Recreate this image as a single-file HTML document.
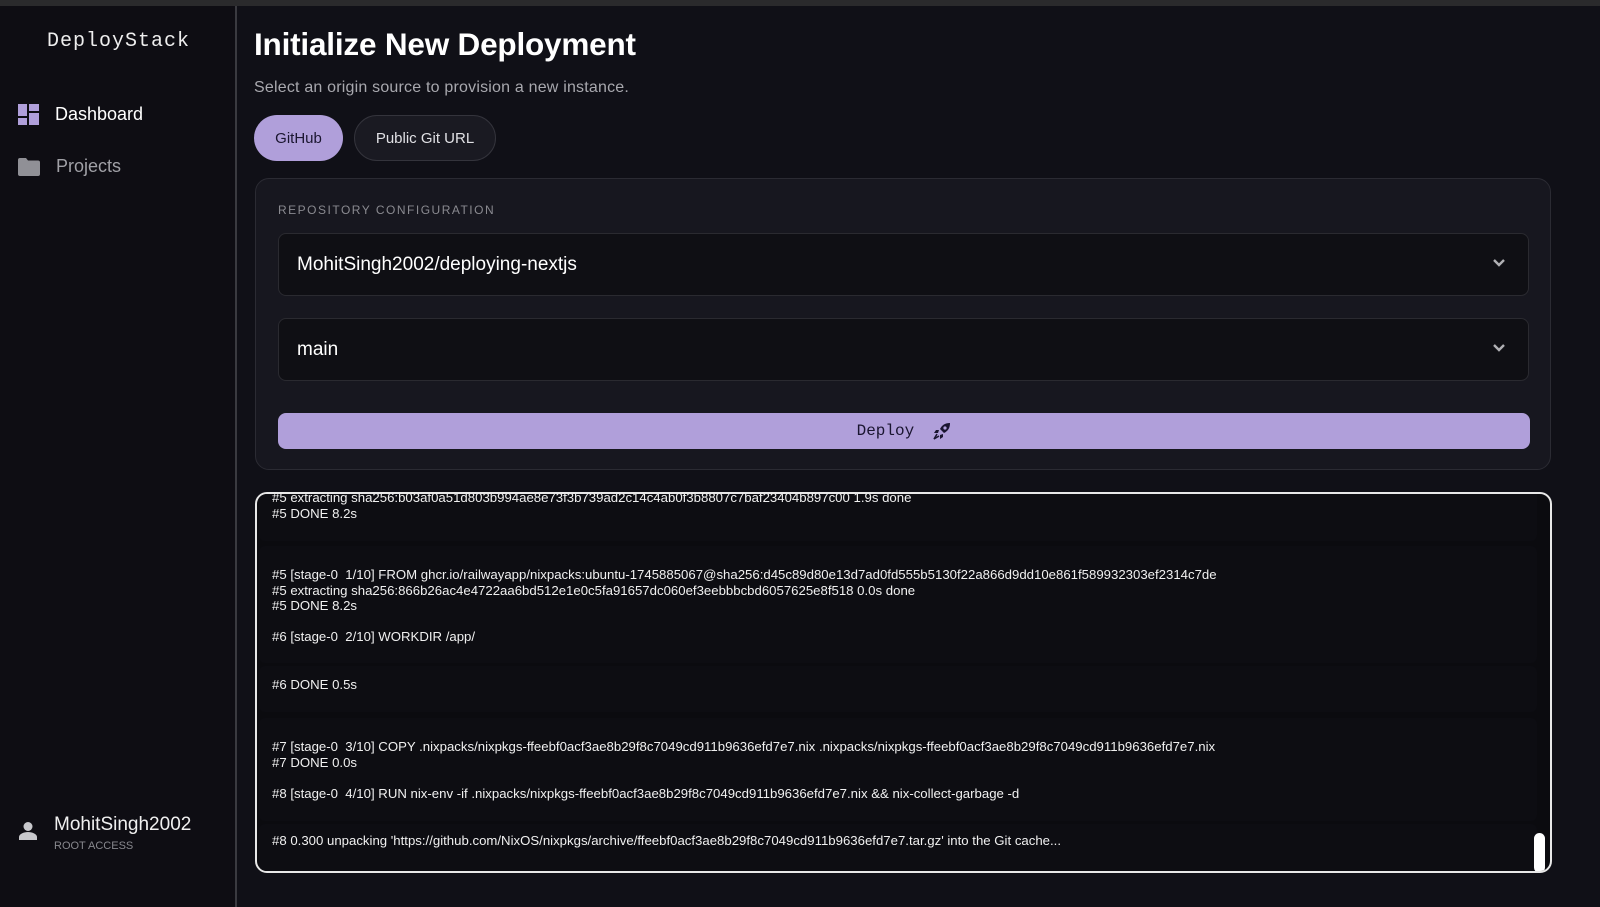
<!DOCTYPE html>
<html><head><meta charset="utf-8"><style>
*{box-sizing:border-box;margin:0;padding:0}
body{width:1600px;height:907px;background:#101017;font-family:"Liberation Sans",sans-serif;color:#fff;position:relative;overflow:hidden}
.top{position:absolute;left:0;top:0;width:1600px;height:6px;background:#2a2a2c}
.side{position:absolute;left:0;top:6px;width:237px;height:901px;background:#0e0d13;border-right:2px solid #3a3a40}
.logo{position:absolute;left:47px;top:24px;font-family:"Liberation Mono",monospace;font-size:20px;letter-spacing:1px;color:#eee}
.nav{position:absolute;left:18px;display:flex;align-items:center;font-size:18px}
.nav span{margin-left:16px}
h1{position:absolute;left:254px;top:26px;font-size:31.5px;font-weight:bold;letter-spacing:-0.2px}
.sub{position:absolute;left:254px;top:79px;font-size:16px;color:#a8a8ae;letter-spacing:0.2px}
.pill{position:absolute;top:115px;height:46px;border-radius:23px;font-size:15px;display:flex;align-items:center;justify-content:center}
.card{position:absolute;left:255px;top:178px;width:1296px;height:292px;background:#17171f;border:1px solid #2b2b33;border-radius:14px}
.lbl{position:absolute;left:22px;top:24px;font-size:12px;letter-spacing:1.5px;color:#8a8a90}
.sel{position:absolute;left:22px;width:1251px;height:63px;background:#0f0f14;border:1px solid #2a2a30;border-radius:8px;font-size:19px;padding-left:18px;display:flex;align-items:center}
.sel svg{position:absolute;right:22px;top:24px}
.btn{position:absolute;left:22px;top:234px;width:1252px;height:36px;background:#b09fda;border-radius:8px;color:#1a1530;font-family:"Liberation Mono",monospace;font-size:16px;display:flex;align-items:center;justify-content:center}
.log{position:absolute;left:255px;top:492px;width:1297px;height:381px;background:#0b0b0f;border:2px solid #e8e8e8;border-radius:12px;overflow:hidden}
.row{position:absolute;left:2px;width:1278px;background:#0d0d12;border-radius:6px;padding-left:13px;font-size:13.2px;line-height:15.5px;color:#f0f0f0;white-space:pre}
</style></head><body>
<div class="top"></div>
<div class="side">
<div class="logo">DeployStack</div>
<div class="nav" style="top:98px;color:#fff"><svg width="21" height="21" viewBox="0 0 21 21"><rect x="0" y="0" width="9" height="12" fill="#b09fda"/><rect x="11" y="0" width="10" height="7" fill="#b09fda"/><rect x="0" y="14" width="9" height="7" fill="#b09fda"/><rect x="11" y="9" width="10" height="12" fill="#b09fda"/></svg><span>Dashboard</span></div>
<div class="nav" style="top:150px;color:#a0a0a6"><svg width="22" height="18" viewBox="0 0 22 18"><path d="M0 2a2 2 0 0 1 2-2h6l2 2.5h10a2 2 0 0 1 2 2V16a2 2 0 0 1-2 2H2a2 2 0 0 1-2-2z" fill="#909096"/></svg><span>Projects</span></div>
<div style="position:absolute;left:18px;top:815px"><svg width="20" height="20" viewBox="0 0 20 20"><circle cx="10" cy="5.5" r="4.5" fill="#c8c8cc"/><path d="M1 19v-3c0-3 5-5 9-5s9 2 9 5v3z" fill="#c8c8cc"/></svg></div>
<div style="position:absolute;left:54px;top:808px;font-size:19px;color:#f0f0f0">MohitSingh2002</div>
<div style="position:absolute;left:54px;top:834px;font-size:11px;color:#88888e">ROOT ACCESS</div>
</div>
<h1>Initialize New Deployment</h1>
<div class="sub">Select an origin source to provision a new instance.</div>
<div class="pill" style="left:254px;width:89px;background:#b09fda;color:#1b1630">GitHub</div>
<div class="pill" style="left:354px;width:142px;background:#1a1a22;border:1px solid #34343c;color:#e0e0e4">Public Git URL</div>
<div class="card">
<div class="lbl">REPOSITORY CONFIGURATION</div>
<div class="sel" style="top:54px">MohitSingh2002/deploying-nextjs<svg width="14" height="10" viewBox="0 0 14 10"><path d="M2 2l5 5 5-5" stroke="#b0b0b4" stroke-width="2.4" fill="none"/></svg></div>
<div class="sel" style="top:139px">main<svg width="14" height="10" viewBox="0 0 14 10"><path d="M2 2l5 5 5-5" stroke="#b0b0b4" stroke-width="2.4" fill="none"/></svg></div>
<div class="btn">Deploy&nbsp;&nbsp;<svg width="18" height="18" viewBox="0 0 18 18"><path d="M17 1c-5 0-8 2-10 6l4 4c4-2 6-5 6-10z" fill="#1a1530"/><circle cx="12" cy="6" r="1.6" fill="#b09fda"/><path d="M6 8H3l-2 3h4zM10 12v3l-3 2v-4z" fill="#1a1530"/><path d="M4 12l-3 5 5-3" fill="none" stroke="#1a1530" stroke-width="1.5"/></svg></div>
</div>
<div class="log">
<div class="row" style="top:-8px;height:55px;padding-top:4px">#5 extracting sha256:b03af0a51d803b994ae8e73f3b739ad2c14c4ab0f3b8807c7baf23404b897c00 1.9s done
#5 DONE 8.2s</div>
<div class="row" style="top:52px;height:117px;padding-top:21px">#5 [stage-0  1/10] FROM ghcr.io/railwayapp/nixpacks:ubuntu-1745885067@sha256:d45c89d80e13d7ad0fd555b5130f22a866d9dd10e861f589932303ef2314c7de
#5 extracting sha256:866b26ac4e4722aa6bd512e1e0c5fa91657dc060ef3eebbbcbd6057625e8f518 0.0s done
#5 DONE 8.2s

#6 [stage-0  2/10] WORKDIR /app/</div>
<div class="row" style="top:172px;height:46px;padding-top:11px">#6 DONE 0.5s</div>
<div class="row" style="top:224px;height:103px;padding-top:21px">#7 [stage-0  3/10] COPY .nixpacks/nixpkgs-ffeebf0acf3ae8b29f8c7049cd911b9636efd7e7.nix .nixpacks/nixpkgs-ffeebf0acf3ae8b29f8c7049cd911b9636efd7e7.nix
#7 DONE 0.0s

#8 [stage-0  4/10] RUN nix-env -if .nixpacks/nixpkgs-ffeebf0acf3ae8b29f8c7049cd911b9636efd7e7.nix &amp;&amp; nix-collect-garbage -d</div>
<div class="row" style="top:330px;height:47px;padding-top:9px">#8 0.300 unpacking 'https://github.com/NixOS/nixpkgs/archive/ffeebf0acf3ae8b29f8c7049cd911b9636efd7e7.tar.gz' into the Git cache...</div>
<div style="position:absolute;right:5px;top:339px;width:11px;height:40px;background:#fff;border-radius:6px"></div>
</div>
</body></html>
